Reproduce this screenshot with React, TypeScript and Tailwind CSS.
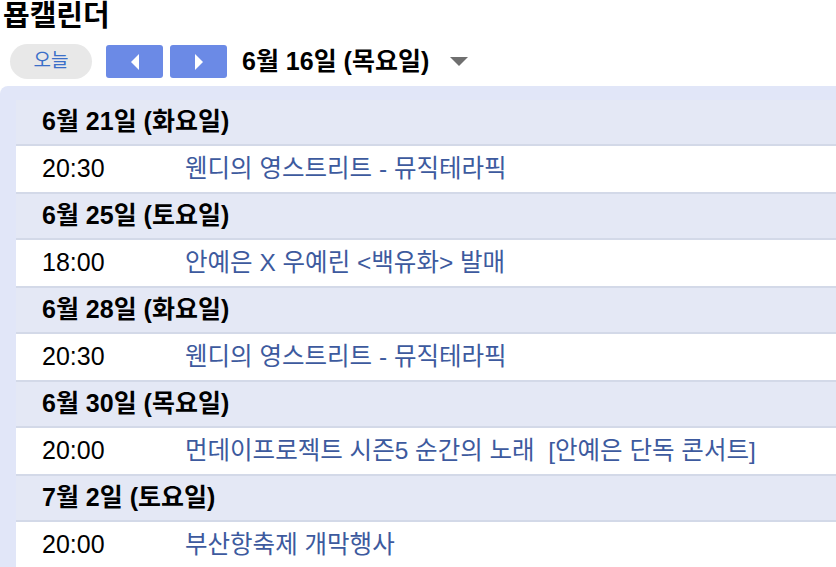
import React from "react";

const font = { fontFamily: "'Liberation Sans', 'Noto Sans CJK KR', Arial, sans-serif" };

const days = [
  { date: "6월 21일 (화요일)", time: "20:30", title: "웬디의 영스트리트 - 뮤직테라픽" },
  { date: "6월 25일 (토요일)", time: "18:00", title: "안예은 X 우예린 <백유화> 발매" },
  { date: "6월 28일 (화요일)", time: "20:30", title: "웬디의 영스트리트 - 뮤직테라픽" },
  { date: "6월 30일 (목요일)", time: "20:00", title: "먼데이프로젝트 시즌5 순간의 노래  [안예은 단독 콘서트]" },
  { date: "7월 2일 (토요일)", time: "20:00", title: "부산항축제 개막행사" },
];

export default function App() {
  return (
    <div className="w-[836px] h-[567px] overflow-hidden bg-white text-black" style={font}>
      <div className="pl-[3px] text-[29px] font-bold leading-[32px] h-[37px]">묩캘린더</div>
      <div className="flex items-center h-[49px] pl-[10px]">
        <div className="w-[82px] h-[35px] rounded-full bg-[#e8e8e8] flex items-center justify-center text-[#3b6fc8] text-[19px]">
          오늘
        </div>
        <div className="ml-[14px] w-[57px] h-[33px] rounded-[3px] bg-[#6b8ae6] flex items-center justify-center">
          <svg width="10" height="16" viewBox="0 0 10 16"><polygon points="9,0 9,16 1,8" fill="white" /></svg>
        </div>
        <div className="ml-[7px] w-[57px] h-[33px] rounded-[3px] bg-[#6b8ae6] flex items-center justify-center">
          <svg width="10" height="16" viewBox="0 0 10 16"><polygon points="1,0 1,16 9,8" fill="white" /></svg>
        </div>
        <div className="ml-[15px] text-[25px] font-bold">6월 16일 (목요일)</div>
        <svg className="ml-[21px]" width="18" height="9" viewBox="0 0 18 9"><polygon points="0,0 18,0 9,9" fill="#6f6f6f" /></svg>
      </div>
      <div className="bg-[#e1e6f8] rounded-tl-[8px] pl-[16px] pt-[14px]">
        {days.map((d) => (
          <div key={d.date}>
            <div className="h-[46px] bg-[#e4e8f5] flex items-center pl-[26px] text-[25px] font-bold border-b-2 border-[#d3d9e8]">
              {d.date}
            </div>
            <div className="h-[48px] bg-white flex items-center pl-[26px] text-[25px] border-b-2 border-[#d3d9e8]">
              <span className="w-[143px] shrink-0">{d.time}</span>
              <span className="text-[#3d5a9e] text-[24.5px] whitespace-pre">{d.title}</span>
            </div>
          </div>
        ))}
      </div>
    </div>
  );
}
